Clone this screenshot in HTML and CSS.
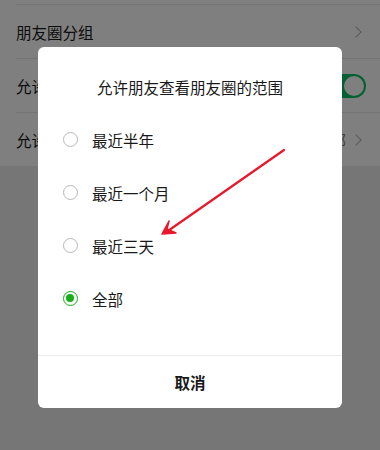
FILE: index.html
```html
<!DOCTYPE html>
<html lang="zh">
<head>
<meta charset="utf-8">
<link rel="stylesheet" href="styles.css">
</head>
<body>
<div class="page">
  <div class="list">
    <div class="stub"></div>
    <div class="row">
      <span class="label">朋友圈分组</span>
      <span class="chev"></span>
    </div>
    <div class="row">
      <span class="label">允许</span>
      <span class="toggle"><span class="knob"></span></span>
    </div>
    <div class="row">
      <span class="label">允许</span>
      <span class="value">全部</span>
      <span class="chev"></span>
    </div>
  </div>
</div>
<div class="mask"></div>
<div class="dialog">
  <div class="title">允许朋友查看朋友圈的范围</div>
  <div class="options">
    <div class="option"><span class="radio"></span><span class="otext">最近半年</span></div>
    <div class="option"><span class="radio"></span><span class="otext">最近一个月</span></div>
    <div class="option"><span class="radio"></span><span class="otext">最近三天</span></div>
    <div class="option"><span class="radio on"></span><span class="otext">全部</span></div>
  </div>
  <div class="footer">取消</div>
</div>
<svg class="arrow" width="380" height="450" viewBox="0 0 380 450">
  <line x1="284" y1="150" x2="165" y2="233" stroke="#e8182c" stroke-width="2.2" stroke-linecap="round"/>
  <path d="M162 234 L169 221 L167 229 L176 233 Z" fill="#e8182c" stroke="#e8182c" stroke-width="1.5" stroke-linejoin="round"/>
</svg>
</body>
</html>
```
FILE: styles.css
```css
html, body {
  margin: 0;
  padding: 0;
}
body {
  width: 380px;
  height: 450px;
  overflow: hidden;
  position: relative;
  font-family: "Noto Sans CJK SC", "Noto Sans", sans-serif;
  background: #ededed;
}
.page {
  width: 380px;
  height: 450px;
  background: #ededed;
}
.list {
  background: #ffffff;
}
.stub {
  height: 4px;
}
.row {
  height: 53px;
  margin-left: 16px;
  padding-right: 16px;
  border-top: 1px solid #e6e6e6;
  display: flex;
  align-items: center;
  font-size: 15.5px;
  color: #191919;
}
.label {
  flex: 1;
  white-space: nowrap;
}
.value {
  color: #808080;
  margin-right: 6px;
  font-size: 15.5px;
}
.chev {
  width: 7px;
  height: 7px;
  border-top: 1.6px solid #b2b2b2;
  border-right: 1.6px solid #b2b2b2;
  transform: rotate(45deg);
  margin-right: 4px;
}
.toggle {
  width: 40px;
  height: 24px;
  border-radius: 12px;
  background: #07c160;
  display: flex;
  justify-content: flex-end;
  align-items: center;
  padding: 0 2px;
  box-sizing: border-box;
  margin-right: -2px;
}
.knob {
  width: 20px;
  height: 20px;
  border-radius: 50%;
  background: #fff;
}
.mask {
  position: absolute;
  inset: 0;
  background: rgba(0, 0, 0, 0.5);
}
.dialog {
  position: absolute;
  left: 38px;
  top: 47px;
  width: 304px;
  height: 361px;
  background: #fff;
  border-radius: 6px;
  display: flex;
  flex-direction: column;
}
.title {
  padding-top: 29px;
  height: 22px;
  line-height: 22px;
  padding-bottom: 15px;
  text-align: center;
  font-size: 15.5px;
  color: #191919;
}
.options {
  display: flex;
  flex-direction: column;
  padding-bottom: 30px;
}
.option {
  height: 53px;
  display: flex;
  align-items: center;
  padding-left: 25px;
  gap: 14px;
  font-size: 15.5px;
  color: #191919;
}
.radio {
  width: 15px;
  height: 15px;
  box-sizing: border-box;
  border-radius: 50%;
  border: 1.5px solid #b8b8b8;
  flex: none;
}
.radio.on {
  border: 1.6px solid #1aad19;
  position: relative;
}
.radio.on::after {
  content: "";
  position: absolute;
  left: 1.9px;
  top: 1.9px;
  width: 8.5px;
  height: 8.5px;
  border-radius: 50%;
  background: #1aad19;
}
.footer {
  border-top: 1px solid #ececec;
  flex: 1;
  display: flex;
  align-items: center;
  justify-content: center;
  font-size: 15.5px;
  font-weight: bold;
  color: #191919;
}
.arrow {
  position: absolute;
  left: 0;
  top: 0;
}
```
